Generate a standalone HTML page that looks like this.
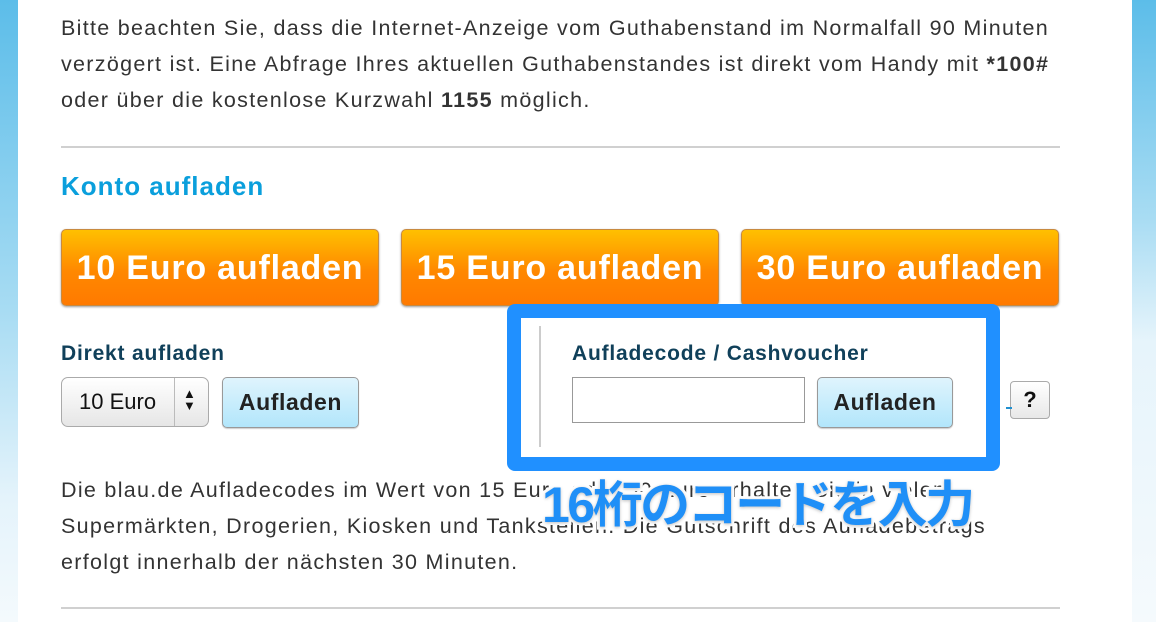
<!DOCTYPE html>
<html><head><meta charset="utf-8"><style>
*{margin:0;padding:0;box-sizing:border-box}
body{width:1156px;height:622px;overflow:hidden;background:#fff;font-family:"Liberation Sans",Arial,sans-serif;position:relative;color:#333}
.sl{position:absolute;left:0;top:0;width:18px;height:622px;background:linear-gradient(#5cbde9,#a8dcf3 50%,#e4f3fb 80%,#f4fafd)}
.sr{position:absolute;left:1132px;top:0;width:24px;height:622px;background:linear-gradient(#5cbde9,#a8dcf3 35%,#e6f4fb 55%,#f5fafd)}
.a{position:absolute;white-space:nowrap}
p.t{font-size:21.5px;letter-spacing:1.3px;line-height:36px;left:61px}
.hr{position:absolute;left:61px;width:999px;height:2px;background:#d0d0d0}
h2{position:absolute;left:61px;top:171px;font-size:26px;letter-spacing:1px;color:#0a9fdc;font-weight:bold}
.ob{position:absolute;top:229px;width:318px;height:77px;border-radius:5px;background:linear-gradient(#ffc000,#ff8800 55%,#ff7a00);border:1px solid #c88a40;box-shadow:0 1px 2px rgba(0,0,0,.4);color:#fff;font-weight:bold;font-size:34px;letter-spacing:0.8px;text-align:center;line-height:76px}
.lbl{font-size:21px;letter-spacing:0.8px;font-weight:bold;color:#10405a}
.btn{position:absolute;height:51px;border:1px solid #999;border-radius:5px;background:linear-gradient(#dff4fd,#b2e6fb);font-weight:bold;font-size:23px;letter-spacing:0.6px;color:#222;text-align:center;line-height:49px;box-shadow:0 1px 1px rgba(0,0,0,.2)}
.sel{position:absolute;left:61px;top:377px;width:148px;height:50px;border:1px solid #aaa;border-radius:7px;background:linear-gradient(#fff,#e6e6e6);font-size:22px;color:#111}
.box{position:absolute;left:507px;top:304px;width:493px;height:167px;border:14px solid #2090ff;border-radius:8px}
.jp{position:absolute;left:542px;top:465px;font-family:"Liberation Sans","Noto Sans CJK JP",sans-serif;font-weight:bold;font-size:50px;color:#1f8ff7;-webkit-text-stroke:6px #fff;paint-order:stroke fill;letter-spacing:-2.5px;white-space:nowrap;text-shadow:0 1px 3px rgba(0,0,0,.25)}
</style></head><body>
<div class="sl"></div><div class="sr"></div>
<p class="a t" style="top:10px">Bitte beachten Sie, dass die Internet-Anzeige vom Guthabenstand im Normalfall 90 Minuten</p>
<p class="a t" style="top:46px">verzögert ist. Eine Abfrage Ihres aktuellen Guthabenstandes ist direkt vom Handy mit <b>*100#</b></p>
<p class="a t" style="top:82px">oder über die kostenlose Kurzwahl <b>1155</b> möglich.</p>
<div class="hr" style="top:146px"></div>
<h2>Konto aufladen</h2>
<div class="ob" style="left:61px">10 Euro aufladen</div>
<div class="ob" style="left:401px">15 Euro aufladen</div>
<div class="ob" style="left:741px">30 Euro aufladen</div>
<div class="a lbl" style="left:61px;top:342px">Direkt aufladen</div>
<div class="sel"><span style="position:absolute;left:17px;top:11px">10 Euro</span><div style="position:absolute;left:112px;top:0;width:1px;height:48px;background:#bbb"></div><span style="position:absolute;left:121px;top:10px;font-size:13px;line-height:12px">▲<br>▼</span></div>
<div class="btn" style="left:222px;top:377px;width:137px">Aufladen</div>
<div style="position:absolute;left:539px;top:326px;width:2px;height:121px;background:#ccc"></div>
<div class="a lbl" style="left:572px;top:342px">Aufladecode / Cashvoucher</div>
<div style="position:absolute;left:572px;top:377px;width:233px;height:46px;border:1px solid #999;background:#fff"></div>
<div class="btn" style="left:817px;top:377px;width:136px">Aufladen</div>
<div class="box"></div>
<div style="position:absolute;left:1010px;top:381px;width:40px;height:38px;border:1px solid #aaa;border-radius:4px;background:linear-gradient(#fff,#e8e8e8);font-weight:bold;font-size:22px;text-align:center;line-height:36px;color:#111">?</div>
<div style="position:absolute;left:1006px;top:407px;width:6px;height:2px;background:#2090d0"></div>
<p class="a t" style="top:472px">Die blau.de Aufladecodes im Wert von 15 Euro oder 30 Euro erhalten Sie in vielen</p>
<p class="a t" style="top:508px">Supermärkten, Drogerien, Kiosken und Tankstellen. Die Gutschrift des Aufladebetrags</p>
<p class="a t" style="top:544px">erfolgt innerhalb der nächsten 30 Minuten.</p>
<div class="hr" style="top:607px"></div>
<div class="jp">16桁のコードを入力</div>
</body></html>
